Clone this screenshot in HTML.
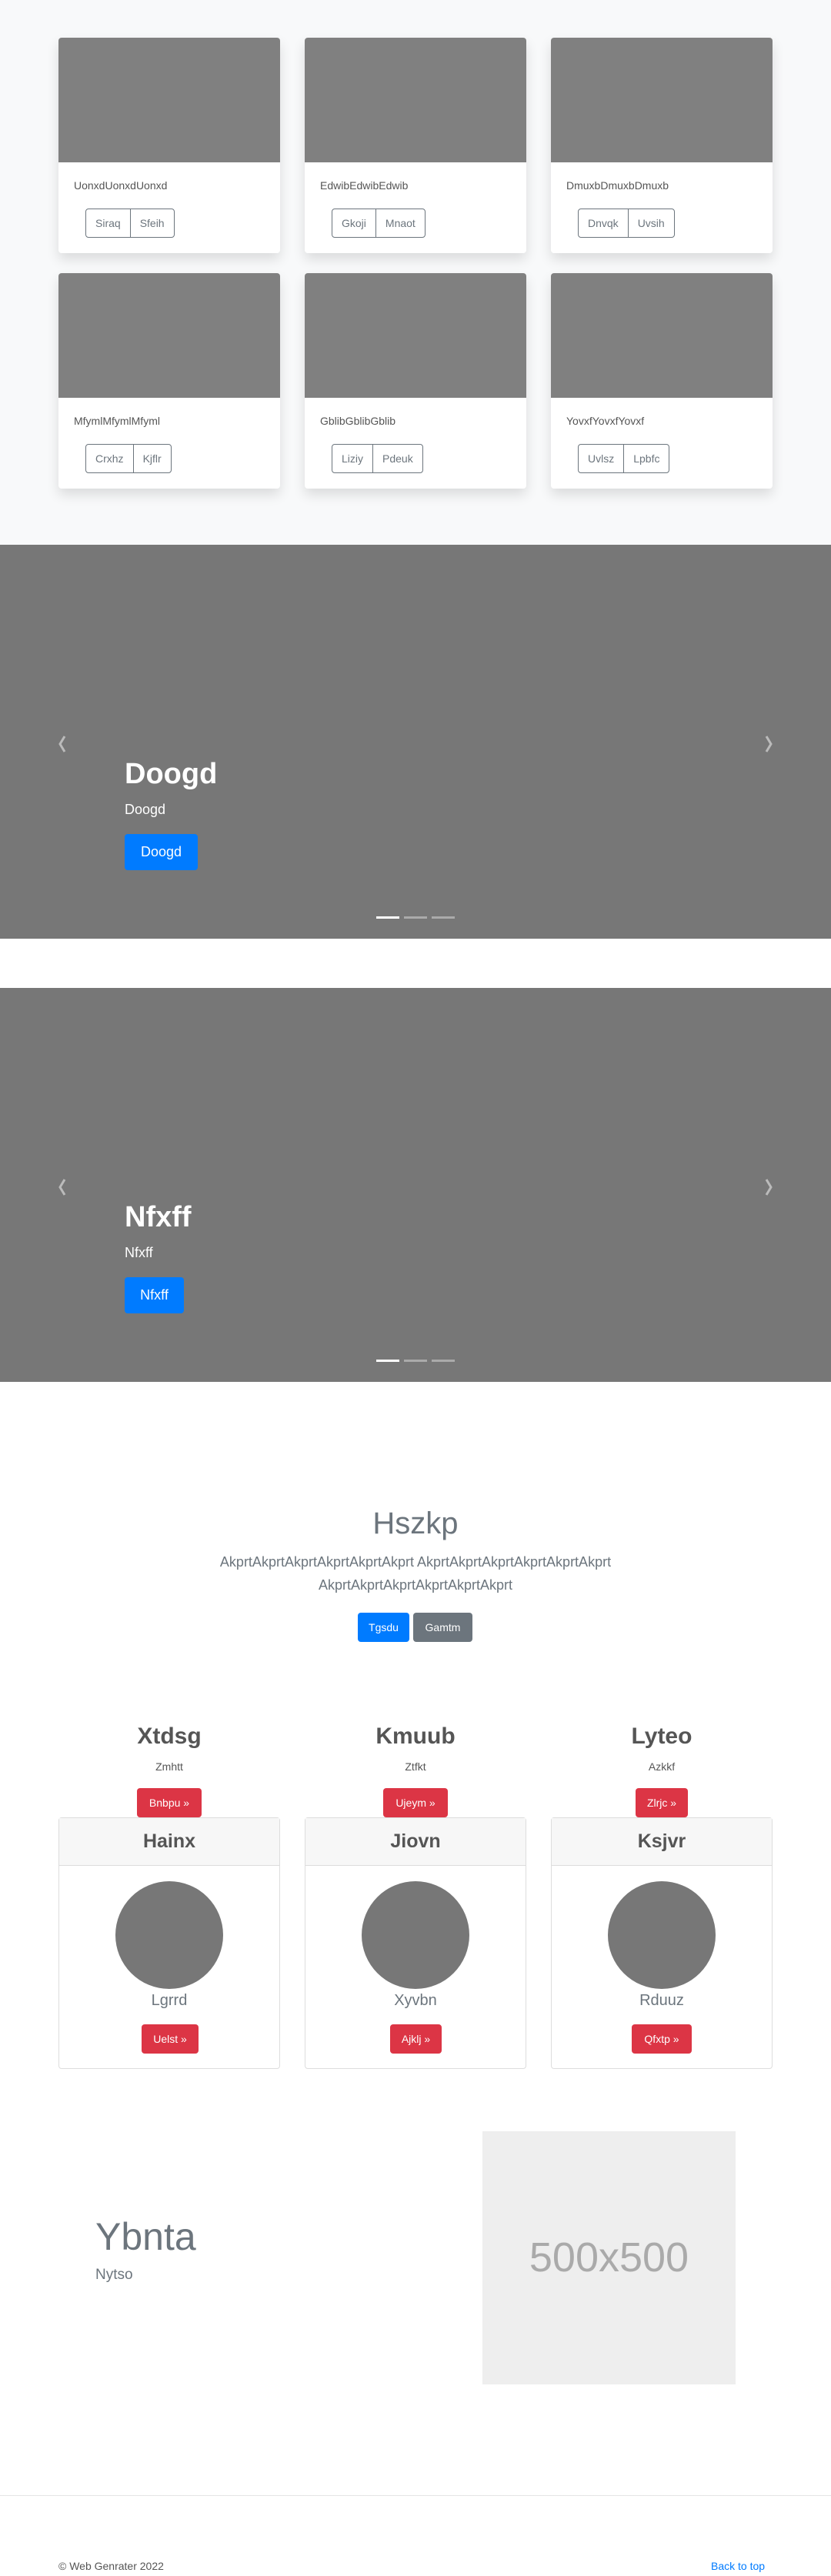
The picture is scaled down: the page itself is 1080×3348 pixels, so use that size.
<!DOCTYPE html>
<html><head><meta charset="utf-8"><style>
*{box-sizing:border-box;margin:0;padding:0}
body{width:1080px;height:3348px;position:relative;font-family:"Liberation Sans",sans-serif;background:#fff;color:#212529;overflow:hidden}
.a{position:absolute}
.top{left:0;top:0;width:1080px;height:708px;background:#f8f9fa}
.card{position:absolute;width:288px;height:280px;background:#fff;border-radius:4px;box-shadow:0 8px 16px rgba(0,0,0,.12);overflow:hidden}
.card .img{height:162px;background:#808080}
.bg{position:absolute;left:35px;top:222px;display:flex;border:1px solid #6c757d;border-radius:4px;height:38px}
.bg span{font-size:14px;color:#6c757d;padding:0 12px;line-height:36px}
.bg span+span{border-left:1px solid #6c757d}
.car{left:0;width:1080px;height:512px;background:#777}
.car .h{position:absolute;left:162px;top:277px;font-size:38px;font-weight:bold;color:#fff}
.car .s{position:absolute;left:162px;top:334px;font-size:18px;color:#fff}
.car .b{position:absolute;left:162px;top:376px;width:95px;height:47px;background:#007bff;color:#fff;border-radius:4px;font-size:18px;line-height:47px;text-align:center}
.car svg{position:absolute;top:247px}
.ind{position:absolute;top:483px;width:30px;height:3px;background:#aaa}
.btn{position:absolute;color:#fff;border-radius:4px;font-size:14px;text-align:center;height:38px;line-height:38px}
.red{background:#dc3545}
.f{position:absolute;width:320px;text-align:center}
.pc{position:absolute;width:288px;top:2362px;height:327px;border:1px solid #ddd;border-radius:4px}
.pc .hd{height:62px;background:#f7f7f7;border-bottom:1px solid #ddd;text-align:center;font-size:25px;font-weight:bold;color:#555;line-height:60px}
.pc .c{position:absolute;left:73px;top:82px;width:140px;height:140px;border-radius:50%;background:#777}
.pc .n{position:absolute;left:0;width:100%;top:226px;text-align:center;font-size:20px;color:#6c757d;font-weight:300}
</style></head><body>
<div class="a top"></div>
<div class="card" style="left:76px;top:49px"><div class="img"></div><div class="a" style="left:20px;top:184px;font-size:14px;color:#555">UonxdUonxdUonxd</div><div class="bg"><span>Siraq</span><span>Sfeih</span></div></div>
<div class="card" style="left:396px;top:49px"><div class="img"></div><div class="a" style="left:20px;top:184px;font-size:14px;color:#555">EdwibEdwibEdwib</div><div class="bg"><span>Gkoji</span><span>Mnaot</span></div></div>
<div class="card" style="left:716px;top:49px"><div class="img"></div><div class="a" style="left:20px;top:184px;font-size:14px;color:#555">DmuxbDmuxbDmuxb</div><div class="bg"><span>Dnvqk</span><span>Uvsih</span></div></div>
<div class="card" style="left:76px;top:355px"><div class="img"></div><div class="a" style="left:20px;top:184px;font-size:14px;color:#555">MfymlMfymlMfyml</div><div class="bg"><span>Crxhz</span><span>Kjflr</span></div></div>
<div class="card" style="left:396px;top:355px"><div class="img"></div><div class="a" style="left:20px;top:184px;font-size:14px;color:#555">GblibGblibGblib</div><div class="bg"><span>Liziy</span><span>Pdeuk</span></div></div>
<div class="card" style="left:716px;top:355px"><div class="img"></div><div class="a" style="left:20px;top:184px;font-size:14px;color:#555">YovxfYovxfYovxf</div><div class="bg"><span>Uvlsz</span><span>Lpbfc</span></div></div>

<div class="a car" style="top:708px">
<svg style="left:74px" width="14" height="24" viewBox="0 0 14 24"><path d="M10 2 L4 12 L10 22" stroke="#bbb" stroke-width="3" fill="none"/></svg>
<svg style="left:992px" width="14" height="24" viewBox="0 0 14 24"><path d="M4 2 L10 12 L4 22" stroke="#bbb" stroke-width="3" fill="none"/></svg>
<div class="h">Doogd</div><div class="s">Doogd</div><div class="b">Doogd</div>
<div class="ind" style="left:489px;background:#fff"></div><div class="ind" style="left:525px"></div><div class="ind" style="left:561px"></div>
</div>
<div class="a car" style="top:1284px">
<svg style="left:74px" width="14" height="24" viewBox="0 0 14 24"><path d="M10 2 L4 12 L10 22" stroke="#bbb" stroke-width="3" fill="none"/></svg>
<svg style="left:992px" width="14" height="24" viewBox="0 0 14 24"><path d="M4 2 L10 12 L4 22" stroke="#bbb" stroke-width="3" fill="none"/></svg>
<div class="h">Nfxff</div><div class="s">Nfxff</div><div class="b" style="width:77px">Nfxff</div>
<div class="ind" style="left:489px;background:#fff"></div><div class="ind" style="left:525px"></div><div class="ind" style="left:561px"></div>
</div>

<div class="a" style="left:0;width:1080px;top:1958px;text-align:center;font-size:40px;font-weight:300;color:#6c757d">Hszkp</div>
<div class="a" style="left:240px;width:600px;top:2015px;text-align:center;font-size:18px;font-weight:300;color:#6c757d;line-height:30px">AkprtAkprtAkprtAkprtAkprtAkprt AkprtAkprtAkprtAkprtAkprtAkprt AkprtAkprtAkprtAkprtAkprtAkprt</div>
<div class="btn" style="left:465px;top:2096px;width:67px;background:#007bff">Tgsdu</div>
<div class="btn" style="left:537px;top:2096px;width:77px;background:#6c757d">Gamtm</div>

<div class="f" style="left:60px;top:2240px"><div style="font-size:30px;font-weight:bold;color:#555">Xtdsg</div><div style="font-size:14px;color:#555;margin-top:14px">Zmhtt</div></div>
<div class="f" style="left:380px;top:2240px"><div style="font-size:30px;font-weight:bold;color:#555">Kmuub</div><div style="font-size:14px;color:#555;margin-top:14px">Ztfkt</div></div>
<div class="f" style="left:700px;top:2240px"><div style="font-size:30px;font-weight:bold;color:#555">Lyteo</div><div style="font-size:14px;color:#555;margin-top:14px">Azkkf</div></div>
<div class="btn red" style="left:178px;top:2324px;width:84px">Bnbpu »</div>
<div class="btn red" style="left:498px;top:2324px;width:84px">Ujeym »</div>
<div class="btn red" style="left:826px;top:2324px;width:68px">Zlrjc »</div>

<div class="pc" style="left:76px"><div class="hd">Hainx</div><div class="c"></div><div class="n">Lgrrd</div><div class="btn red" style="left:107px;top:268px;width:74px">Uelst »</div></div>
<div class="pc" style="left:396px"><div class="hd">Jiovn</div><div class="c"></div><div class="n">Xyvbn</div><div class="btn red" style="left:110px;top:268px;width:67px">Ajklj »</div></div>
<div class="pc" style="left:716px"><div class="hd">Ksjvr</div><div class="c"></div><div class="n">Rduuz</div><div class="btn red" style="left:104px;top:268px;width:78px">Qfxtp »</div></div>

<div class="a" style="left:124px;top:2878px;font-size:50px;font-weight:300;color:#6c757d">Ybnta</div>
<div class="a" style="left:124px;top:2946px;font-size:19px;font-weight:300;color:#6c757d">Nytso</div>
<div class="a" style="left:627px;top:2770px;width:329px;height:329px;background:#eee;color:#aaa;font-size:54px;text-align:center;line-height:329px">500x500</div>

<div class="a" style="left:0;top:3243px;width:1080px;height:1px;background:#e5e5e5"></div>
<div class="a" style="left:76px;top:3327px;font-size:14px;color:#555">© Web Genrater 2022</div>
<div class="a" style="left:924px;top:3327px;font-size:14px;color:#007bff">Back to top</div>
</body></html>
